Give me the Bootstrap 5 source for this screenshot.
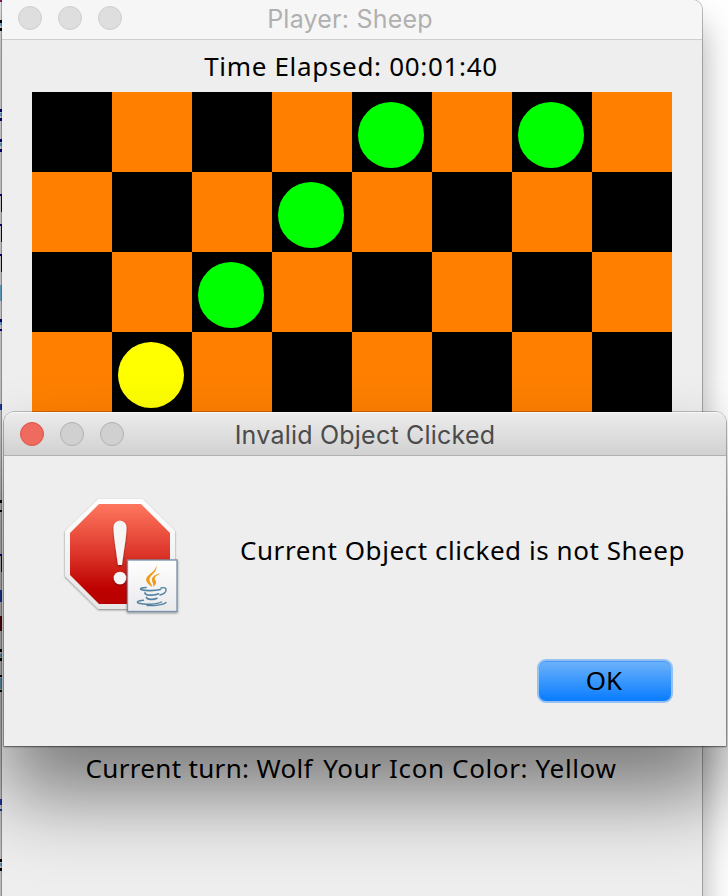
<!DOCTYPE html>
<html lang="en">
<head>
<meta charset="utf-8">
<title>Player: Sheep</title>
<link rel="stylesheet" href="https://cdn.jsdelivr.net/npm/bootstrap@5.3.0/dist/css/bootstrap.min.css">
<style>
body{width:728px;height:896px;background:#fff;color:#000;font:26px/36px "Noto Sans","Open Sans",sans-serif}
.bg-strip{left:0;top:0;width:2px;height:896px;background:#dfdfe2}
.win-back{width:700px;height:940px;margin-left:2px;background:#eee;border-radius:0 10px 0 0;box-shadow:0 0 0 1px rgba(0,0,0,.25),0 24px 34px rgba(0,0,0,.34)}
.bar-back{height:40px;background:#f6f6f6;border-bottom:1px solid #cfcfcf;border-radius:0 9px 0 0;color:#b0b0b0}
.win-title{font-family:Inter,Roboto,sans-serif;font-size:25px;letter-spacing:.22px;padding-top:2px;white-space:nowrap}
.lights{left:16px;gap:16px}
.light{width:24px;height:24px;border-radius:50%;background:#dedede;border:1px solid #cfcfcf}
.line-time{height:52px;line-height:52px;padding-right:2px}
.board{display:grid;grid-template-columns:repeat(8,80px);grid-auto-rows:80px;width:640px;margin:0 30px}
.sq{background:#000;padding:10px 0 0 6px}
.sq-o{background:#ff8000}
.piece{width:66px;height:66px;border-radius:50%}
.green{background:#0f0}.yellow{background:#ff0}
.line-turn{height:72px;line-height:72px;padding-right:2px}
.dlg{left:4px;top:412px;width:722px;height:334px;background:#eee;border-radius:11px 11px 0 0;box-shadow:0 0 0 1px rgba(0,0,0,.2),0 1px 2px rgba(0,0,0,.4),0 50px 80px rgba(0,0,0,.48)}
.bar-dlg{height:44px;background:linear-gradient(#ececec,#d1d1d1);border-bottom:1px solid #b0b0b0;border-top:1px solid #f7f7f7;border-radius:10px 10px 0 0;color:#4b4b4b}
.bar-dlg .light{background:#d0d0d0;border-color:#b1b1b1}
.bar-dlg .light.close-on{background:#ef6b5f;border-color:#d9554a}
.dlg-body{height:180px;padding:36px 0 0 54px}
.msg{margin:40px 0 0 52px;white-space:nowrap}
.ok-btn,.ok-btn:hover{width:136px;height:44px;margin-right:53px;margin-top:23px;padding:0 2px 0 0;border:2px solid #94c1f1;border-radius:9px;background:linear-gradient(#6db3fa,#087cff);box-shadow:inset 0 1px 0 #4497f4;color:#000;font-size:26px;line-height:36px;padding-bottom:2px}
.fit{display:inline-block;white-space:nowrap}
#t-time{letter-spacing:.68px}#t-turn{letter-spacing:.63px}#t-msg{letter-spacing:.55px}
.turn-who{letter-spacing:.33px;margin-right:3px}
</style>
<script src="https://cdn.jsdelivr.net/npm/bootstrap@5.3.0/dist/js/bootstrap.bundle.min.js"></script>
</head>
<body class="position-relative overflow-hidden m-0">
<svg class="bg-strip position-absolute" viewBox="0 0 2 896" aria-hidden="true">
<path d="M0 0h2v2H0z" fill="#80205c"/>
<path d="M0 20h2v3H0zM0 28h2v3H0zM0 500h2v3H0zM0 510h2v2H0zM0 649h2v3H0zM0 658h2v3H0zM0 675h2v2H0zM0 690h2v2H0zM0 859h2v3H0zM0 868h2v3H0z" fill="#000"/>
<path d="M0 23h2v3H0zM0 113h2v3H0zM0 143h2v3H0zM0 285h2v16H0zM0 322h2v3H0zM0 654h2v3H0zM0 678h2v11H0zM0 863h2v3H0z" fill="#6fb0d8"/>
<path d="M0 109h2v3H0zM0 118h2v3H0zM0 139h2v3H0zM0 149h2v3H0zM0 194h2v2H0zM1 196h1v16H1zM0 224h2v2H0zM1 226h1v16H1zM0 254h2v2H0zM1 256h1v16H1zM0 319h2v3H0zM0 329h2v2H0zM0 554h2v2H0zM1 556h1v16H1z" fill="#000080"/>
<path d="M0 404h2v6H0zM0 590h2v12H0zM0 799h2v6H0zM0 809h2v2H0z" fill="#2440b0"/>
<path d="M0 616h2v15H0z" fill="#600a0a"/>
</svg>

<main class="win-back position-relative">
  <header class="bar-back d-flex align-items-center justify-content-center position-relative pb-1">
    <div class="lights d-flex position-absolute"><i class="light"></i><i class="light"></i><i class="light"></i></div>
    <span class="win-title fit pe-1" id="t-player">Player: Sheep</span>
  </header>
  <div class="line-time text-center"><span class="fit" id="t-time">Time Elapsed: 00:01:40</span></div>
  <div class="board" id="board"></div>
  <div class="line-turn text-center"><span class="fit" id="t-turn"><span class="turn-who">Current turn: Wolf</span> Your Icon Color: Yellow</span></div>
</main>

<section class="dlg position-absolute" role="alertdialog" aria-labelledby="t-dlg">
  <header class="bar-dlg d-flex align-items-center justify-content-center position-relative">
    <div class="lights d-flex position-absolute"><i class="light close-on"></i><i class="light"></i><i class="light"></i></div>
    <span class="win-title fit" id="t-dlg">Invalid Object Clicked</span>
  </header>
  <div class="dlg-body d-flex align-items-start">
    <svg width="130" height="130" viewBox="58 492 130 130" class="flex-shrink-0" aria-hidden="true">
      <defs>
        <linearGradient id="red" x2="0" y2="1"><stop stop-color="#ff775f"/><stop offset=".5" stop-color="#dc3529"/><stop offset=".85" stop-color="#bd0000"/><stop offset="1" stop-color="#b80000"/></linearGradient>
        <linearGradient id="rim" x2="0" y2="1"><stop stop-color="#fff"/><stop offset="1" stop-color="#e6e6e6"/></linearGradient>
        <linearGradient id="tile" x2="0" y2="1"><stop stop-color="#fff"/><stop offset="1" stop-color="#e9e9ec"/></linearGradient>
        <filter id="sh" x="-10%" y="-10%" width="120%" height="125%"><feDropShadow dx="0" dy="1" stdDeviation="1" flood-opacity=".45"/></filter>
      </defs>
      <path d="M98.500 499h44L175 531v46l-32.500 32h-44L65 576v-45z" fill="url(#rim)" filter="url(#sh)"/>
      <path d="M99 504h42l29 29v42l-29 29H99l-29-29v-42z" fill="url(#red)"/>
      <g filter="url(#sh)" fill="#f5f5f5"><path d="M113.500 527.500C113.500 518.500 126.500 518.500 126.500 527.500C126.500 537 123.500 553 122 565H118C116.500 553 113.500 537 113.500 527.500z"/><circle cx="120" cy="578" r="6.300"/></g>
      <rect x="127.500" y="560" width="49.500" height="51.500" fill="url(#tile)" stroke="#7890a8" stroke-width="1.300" filter="url(#sh)"/>
      <path d="M156.200 565C158.500 572.500 148.500 575 149.500 580.500C150 583 152 584 152 587C148 584 145.500 581.500 146.300 578.500C147.500 574 156.500 571.500 156.200 565zM160.500 573.500C155.500 576 153.500 577.500 155.500 580.500C157 583 155.500 585 152.800 587C154 584 152.500 583 152 580.500C151.500 576.500 155.500 574 160.500 573.500z" fill="#f09a16"/>
      <g fill="none" stroke="#5382a1" stroke-linecap="round" stroke-width="1.700">
        <path d="M146 587.500c-4 .3-7 1.300-4.500 2.200 4 1.300 14 1 19-.2M145 592.800c-1 3 10 2.800 13.500 1M146.500 597.300c0 2.700 7.500 2.500 10.500 1"/>
        <path d="M161 588c7-2 7 5-1 7M143.500 600.300c-6 .3-8 2-4.500 3 7 1.800 18 1 22.500-1.300M147 605.500c7 .5 16-.5 19-3" stroke-width="1.400"/>
      </g>
    </svg>
    <div class="msg"><span class="fit" id="t-msg">Current Object clicked is not Sheep</span></div>
  </div>
  <div class="d-flex justify-content-end"><button type="button" class="btn ok-btn">OK</button></div>
</section>
<script>
// Pieces by "row,column"; squares alternate starting with black.
const pieces={'0,4':'green','0,6':'green','1,3':'green','2,2':'green','3,1':'yellow'};
const board=document.getElementById('board');
for(let r=0;r<8;r++)for(let c=0;c<8;c++){
  const sq=document.createElement('div');
  sq.className='sq'+((r+c)%2?' sq-o':'');
  const p=pieces[r+','+c];
  if(p)sq.innerHTML='<div class="piece '+p+'"></div>';
  board.append(sq);
}
</script>
</body>
</html>
